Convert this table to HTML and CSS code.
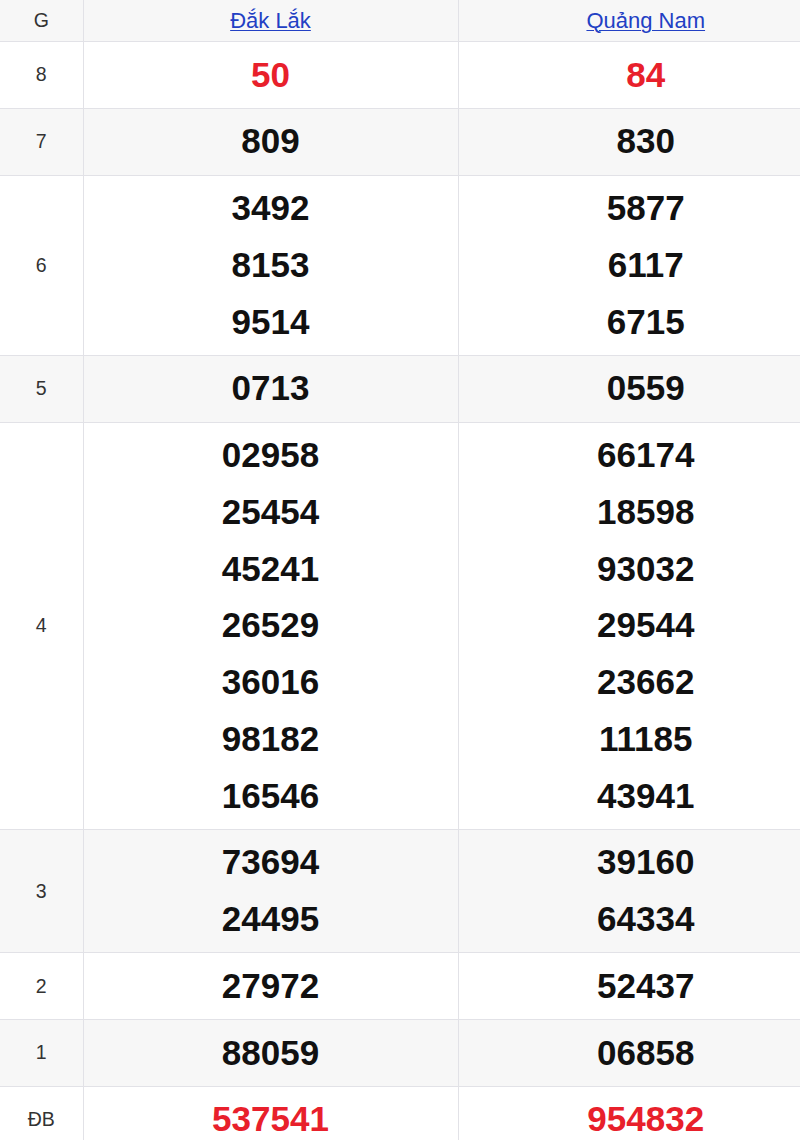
FILE: index.html
```html
<!DOCTYPE html>
<html lang="vi">
<head>
<meta charset="utf-8">
<title>Kết quả xổ số</title>
<link rel="stylesheet" href="styles.css">
</head>
<body>
<table class="kq">
  <colgroup>
    <col class="c-g">
    <col class="c-p">
    <col class="c-p">
  </colgroup>
  <thead>
    <tr class="head">
      <th class="g">G</th>
      <th><a href="#">Đắk Lắk</a></th>
      <th><a href="#">Quảng Nam</a></th>
    </tr>
  </thead>
  <tbody>
    <tr class="w">
      <td class="g">8</td>
      <td class="n red"><div>50</div></td>
      <td class="n red"><div>84</div></td>
    </tr>
    <tr class="s">
      <td class="g">7</td>
      <td class="n"><div>809</div></td>
      <td class="n"><div>830</div></td>
    </tr>
    <tr class="w">
      <td class="g">6</td>
      <td class="n"><div>3492</div><div>8153</div><div>9514</div></td>
      <td class="n"><div>5877</div><div>6117</div><div>6715</div></td>
    </tr>
    <tr class="s">
      <td class="g">5</td>
      <td class="n"><div>0713</div></td>
      <td class="n"><div>0559</div></td>
    </tr>
    <tr class="w">
      <td class="g">4</td>
      <td class="n"><div>02958</div><div>25454</div><div>45241</div><div>26529</div><div>36016</div><div>98182</div><div>16546</div></td>
      <td class="n"><div>66174</div><div>18598</div><div>93032</div><div>29544</div><div>23662</div><div>11185</div><div>43941</div></td>
    </tr>
    <tr class="s">
      <td class="g">3</td>
      <td class="n"><div>73694</div><div>24495</div></td>
      <td class="n"><div>39160</div><div>64334</div></td>
    </tr>
    <tr class="w">
      <td class="g">2</td>
      <td class="n"><div>27972</div></td>
      <td class="n"><div>52437</div></td>
    </tr>
    <tr class="s">
      <td class="g">1</td>
      <td class="n"><div>88059</div></td>
      <td class="n"><div>06858</div></td>
    </tr>
    <tr class="w">
      <td class="g">ĐB</td>
      <td class="n red"><div>537541</div></td>
      <td class="n red"><div>954832</div></td>
    </tr>
  </tbody>
</table>
</body>
</html>
```

FILE: styles.css
```css
html, body {
  margin: 0;
  padding: 0;
  background: #ffffff;
  overflow: hidden;
}

body {
  font-family: Arial, "Liberation Sans", Helvetica, sans-serif;
  color: #222;
}

.kq {
  border-collapse: collapse;
  table-layout: fixed;
  width: 833px;
  font-family: Arial, "Liberation Sans", Helvetica, sans-serif;
}

.c-g { width: 83px; }
.c-p { width: 375px; }

.kq th,
.kq td {
  padding: 0;
  text-align: center;
  vertical-align: middle;
  border-bottom: 1px solid #e2e2e7;
  font-family: Arial, "Liberation Sans", Helvetica, sans-serif;
}

.kq th + th,
.kq td + td {
  border-left: 1px solid #e2e2e7;
}

.head th {
  height: 41px;
  background: #f7f7f7;
  font-weight: normal;
  font-size: 22px;
}

.head a {
  color: #2240c4;
  text-decoration: underline;
  text-underline-offset: 2px;
  text-decoration-thickness: 1px;
}

.head th.g {
  font-size: 19.5px;
  color: #333;
}

.w { background: #ffffff; }
.s { background: #f7f7f7; }

td.g {
  font-size: 19.5px;
  color: #333;
}

td.n {
  padding: 4.5px 0;
  font-size: 35px;
  font-weight: bold;
  line-height: 56.75px;
  color: #111;
}

td.n.red {
  color: #e8202b;
}
```
